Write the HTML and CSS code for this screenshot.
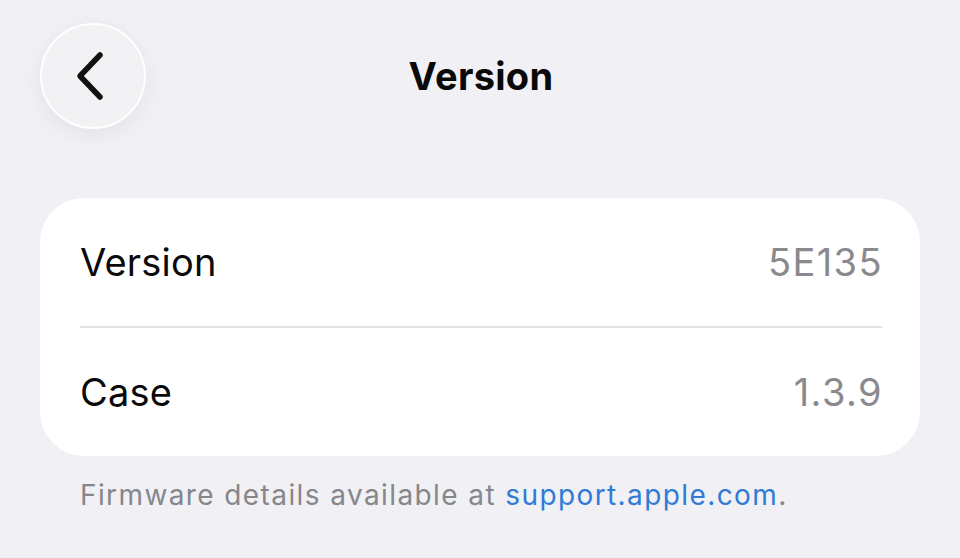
FILE: index.html
```html
<!DOCTYPE html>
<html>
<head>
<meta charset="utf-8">
<link rel="stylesheet" href="styles.css">
</head>
<body>
<div class="screen">
  <header class="nav">
    <button class="back" aria-label="Back">
      <svg width="34" height="50" viewBox="0 0 34 50"><path d="M28 4 L8 25 L28 46" fill="none" stroke="#111" stroke-width="5.5" stroke-linecap="round" stroke-linejoin="round"/></svg>
    </button>
    <h1 class="title">Version</h1>
  </header>
  <section class="card">
    <div class="row">
      <span class="label">Version</span>
      <span class="value">5E135</span>
    </div>
    <div class="row">
      <span class="label">Case</span>
      <span class="value">1.3.9</span>
    </div>
  </section>
  <p class="footer">Firmware details available at <span class="link">support.apple.com</span>.</p>
</div>
</body>
</html>
```
FILE: styles.css
```css
html, body {
  margin: 0;
  padding: 0;
  background: #f0f0f5;
}
body {
  font-family: Inter, "Noto Sans", sans-serif;
  width: 960px;
  height: 558px;
  overflow: hidden;
}
.screen {
  padding: 23px 40px 0 40px;
}
.nav {
  position: relative;
  height: 106px;
  display: flex;
  align-items: center;
  justify-content: center;
}
.back {
  position: absolute;
  left: 0;
  top: 0;
  width: 106px;
  height: 106px;
  border-radius: 50%;
  border: 2px solid #ffffff;
  background: #f2f2f4;
  box-shadow: 0 6px 24px rgba(0,0,0,0.06);
  display: flex;
  align-items: center;
  justify-content: center;
  padding: 0 8px 0 0;
}
.title {
  margin: 0;
  font-size: 38px;
  font-weight: 700;
  color: #0a0a0a;
  letter-spacing: 0.3px;
  padding-left: 2px;
}
.card {
  margin-top: 69px;
  background: #ffffff;
  border-radius: 44px;
  padding: 0 38px 0 40px;
}
.row {
  height: 128px;
  display: flex;
  align-items: center;
  justify-content: space-between;
  font-size: 38px;
}
.row + .row {
  border-top: 2px solid #e2e2e6;
}
.label {
  color: #0a0a0a;
  letter-spacing: 0.2px;
}
.value {
  color: #8a8a8e;
  letter-spacing: 1.4px;
  margin-right: -1px;
}
.footer {
  margin: 22px 0 0 40px;
  font-size: 28px;
  letter-spacing: 1.4px;
  color: #86868b;
}
.link {
  color: #2f7bd6;
}
```
